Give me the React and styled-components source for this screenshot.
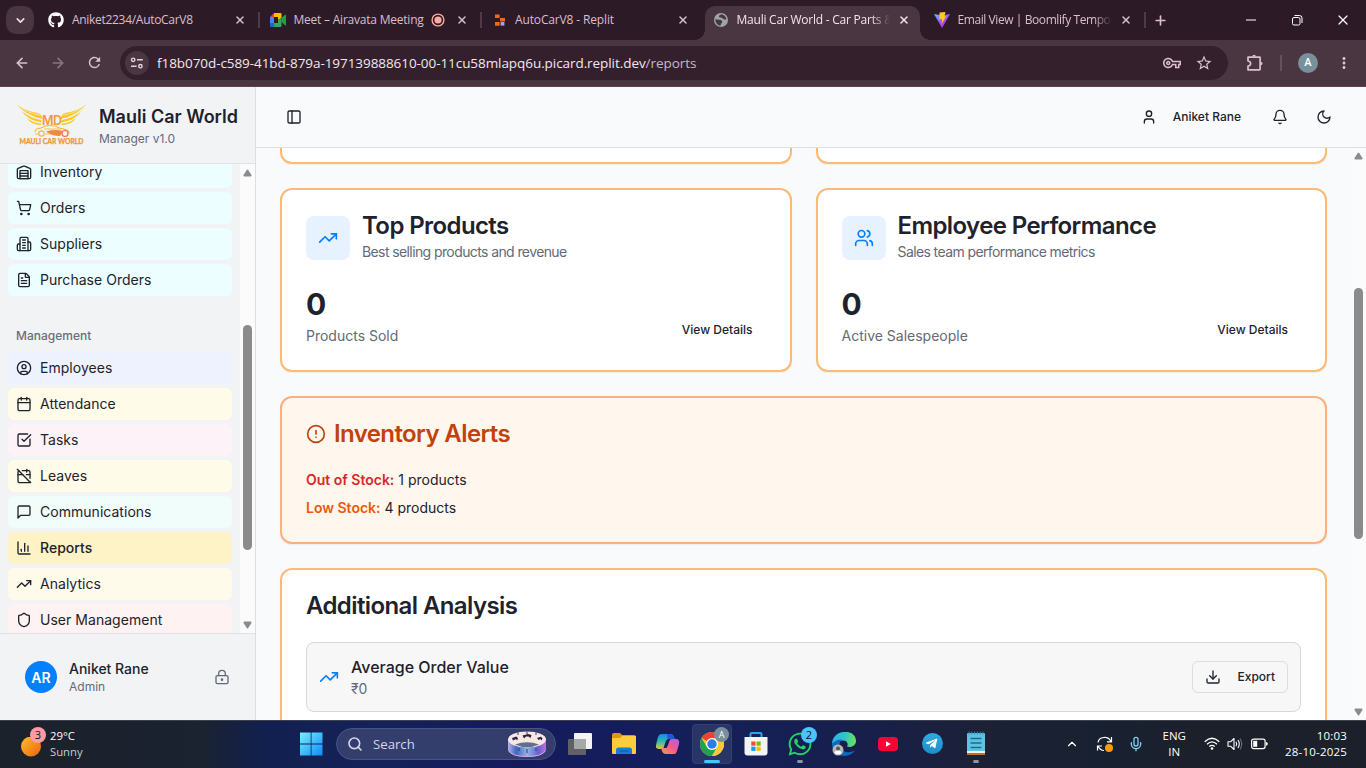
import React from 'react';
import styled, { createGlobalStyle, css } from 'styled-components';
import {
  ShoppingCart, FileText, CircleUser, Calendar, SquareCheckBig, CalendarOff,
  ChartColumn, TrendingUp, Shield, LockKeyhole, PanelLeft, User, Bell, Users,
  CircleAlert, Download, ChevronDown, ChevronUp, X, Plus, Minus, ArrowLeft, ArrowRight, Search, Mic,
} from 'lucide-react';
import { FaGithub, FaWhatsapp, FaTelegramPlane } from 'react-icons/fa';
import { MdOutlineVpnKey, MdStarBorder, MdRefresh, MdMoreVert } from 'react-icons/md';

const Global = createGlobalStyle`
  *, *::before, *::after { box-sizing: border-box; }
  body { margin: 0; overflow: hidden; background: #f9fafc; }
  svg { display: block; flex-shrink: 0; }
`;

const Screen = styled.div`
  width: 1366px;
  height: 768px;
  display: flex;
  flex-direction: column;
  overflow: hidden;
  font-family: Inter, 'Liberation Sans', sans-serif;
  color: #1e222c;
`;

/* ---------- browser window ---------- */

const TabStrip = styled.div`
  height: 40px;
  flex-shrink: 0;
  background: #2c1a26;
  display: flex;
  align-items: center;
  font: 12px 'Open Sans', 'Noto Sans', sans-serif;
`;
const TabSearch = styled.div`
  width: 28px;
  height: 28px;
  margin: 0 6px;
  border-radius: 10px;
  background: #4a3641;
  color: #efdce6;
  display: grid;
  place-items: center;
`;
const Tab = styled.div`
  position: relative;
  width: 221.5px;
  flex-shrink: 0;
  height: 34px;
  margin-top: 6px;
  padding: 0 ${(p) => (p.$separator ? 1.5 : 15.5)}px 6px 8px;
  display: flex;
  align-items: center;
  gap: 8px;
  color: ${(p) => (p.$active ? '#f3e3ec' : '#d9bfce')};
  ${(p) => p.$active && css`
    background: #4a3641;
    border-radius: 10px 10px 0 0;
    width: 215px;
    margin-right: 6px;
    padding-right: 9.5px;
    &::before, &::after {
      content: '';
      position: absolute;
      bottom: 0;
      width: 10px;
      height: 10px;
    }
    &::before { left: -10px; background: radial-gradient(circle at 0 0, transparent 9.5px, #4a3641 10px); }
    &::after { right: -10px; background: radial-gradient(circle at 100% 0, transparent 9.5px, #4a3641 10px); }
  `}
`;
const TabIcon = styled.span`
  width: 16px;
  height: 16px;
  flex-shrink: 0;
  display: grid;
  place-items: center;
`;
const TabTitle = styled.span`
  flex: 1;
  min-width: 0;
  overflow: hidden;
  white-space: nowrap;
  line-height: 18px;
  letter-spacing: ${(p) => p.$spacing}px;
  ${(p) => p.$fade && css`
    mask-image: linear-gradient(90deg, #000 88%, transparent);
  `}
`;
const TabSeparator = styled.span`
  width: 2px;
  height: 16px;
  flex-shrink: 0;
  margin-left: 4px;
  background: #4f3a46;
`;
const NewTab = styled.div`
  margin-left: 6px;
  color: #d9bfce;
`;
const WindowControls = styled.div`
  margin-left: auto;
  padding-right: 15px;
  display: flex;
  gap: 30px;
  color: #fff;
`;

const Toolbar = styled.div`
  height: 47px;
  flex-shrink: 0;
  padding: 0 13px 1px 14px;
  background: #4a3641;
  border-bottom: 1px solid #5b4350;
  display: flex;
  align-items: center;
  color: #dcc0cf;
`;
const NavButton = styled.span`
  width: 16px;
  margin-right: 20px;
  opacity: ${(p) => (p.$disabled ? 0.45 : 1)};
`;
const AddressBar = styled.div`
  width: 1108px;
  height: 34px;
  margin-left: -2px;
  padding: 0 15px 0 5px;
  border-radius: 17px;
  background: #33202c;
  display: flex;
  align-items: center;
`;
const SiteInfo = styled.span`
  width: 24px;
  height: 24px;
  border-radius: 50%;
  background: #4a3641;
  display: grid;
  place-items: center;
`;
const Url = styled.span`
  flex: 1;
  margin-left: 8px;
  white-space: nowrap;
  font: 13.5px 'Open Sans', 'Noto Sans', sans-serif;
  letter-spacing: -0.065px;
  color: #f4e6ee;
  span { color: #cdb6c3; }
`;
const ToolbarIcons = styled.div`
  display: flex;
  align-items: center;
  gap: ${(p) => p.$gap}px;
  margin-left: ${(p) => (p.$end ? 'auto' : 0)};
`;
const Divider = styled.span`
  width: 2px;
  height: 16px;
  background: #66505c;
`;
const ProfileDot = styled.span`
  width: 20px;
  height: 20px;
  margin-right: 1px;
  border-radius: 50%;
  background: #78909c;
  color: #fff;
  display: grid;
  place-items: center;
  font: 500 11px Roboto, sans-serif;
`;

/* ---------- sidebar ---------- */

const Page = styled.div`
  flex: 1;
  min-height: 0;
  display: flex;
  background: #f9fafc;
`;
const Sidebar = styled.aside`
  width: 256px;
  flex-shrink: 0;
  background: #f2f3f5;
  border-right: 1px solid #dcdee2;
  display: flex;
  flex-direction: column;
`;
const Brand = styled.div`
  height: 77px;
  flex-shrink: 0;
  padding: 0 0 0 16px;
  border-bottom: 1px solid #dfe1e5;
  display: flex;
  align-items: center;
  gap: 11px;
`;
const BrandName = styled.div`
  font-size: 18px;
  font-weight: 600;
  line-height: 28px;
  white-space: nowrap;
`;
const BrandSub = styled.div`
  font-size: 12px;
  line-height: 16px;
  color: #646a77;
`;
const SidebarBody = styled.div`
  flex: 1;
  min-height: 0;
  display: flex;
  overflow: hidden;
`;
const NavList = styled.nav`
  width: 240px;
  padding: 0 8px;
  display: flex;
  flex-direction: column;
  gap: 4px;
  margin-top: ${(p) => p.$scroll}px;
`;
const NavItem = styled.div`
  height: 32px;
  flex-shrink: 0;
  padding: 0 8px;
  border-radius: 6px;
  background: ${(p) => p.$bg};
  display: flex;
  align-items: center;
  gap: 8px;
  font-size: 14px;
  letter-spacing: 0.03px;
  font-weight: ${(p) => (p.$active ? 500 : 400)};
  span { padding-bottom: 2px; }
`;
const GroupLabel = styled.div`
  height: 32px;
  flex-shrink: 0;
  margin: 20px 0 -4px;
  padding: 0 8px;
  font-size: 12px;
  font-weight: 500;
  line-height: 32px;
  color: #6a6e78;
`;
const Track = styled.div`
  width: 15px;
  flex-shrink: 0;
  background: #fbfbfb;
  display: flex;
  flex-direction: column;
  align-items: center;
  padding: ${(p) => p.$pad};
`;
const Thumb = styled.div`
  width: 9px;
  height: ${(p) => p.$height}px;
  margin-top: ${(p) => p.$offset}px;
  border-radius: 5px;
  background: #8b8b8b;
`;
const Arrow = styled.svg`
  width: 9px;
  height: 8px;
  fill: #8b8b8b;
  ${(p) => p.$down && css`
    margin-top: auto;
    transform: rotate(180deg);
  `}
`;
const UserPanel = styled.div`
  height: 87px;
  flex-shrink: 0;
  border-top: 1px solid #dfe1e5;
  padding: 0 25px;
  display: flex;
  align-items: center;
  gap: 12px;
`;
const Avatar = styled.div`
  width: 32px;
  height: 32px;
  border-radius: 50%;
  background: #0480ff;
  color: #fff;
  display: grid;
  place-items: center;
  font-size: 14px;
  font-weight: 600;
`;
const UserText = styled.div`
  flex: 1;
  font-size: 14px;
  font-weight: 500;
  line-height: 20px;
  margin-top: -1px;
  small {
    display: block;
    font-size: 12px;
    font-weight: 400;
    line-height: 16px;
    color: #646a77;
  }
`;

/* ---------- main area ---------- */

const Main = styled.main`
  flex: 1;
  min-width: 0;
  display: flex;
  flex-direction: column;
`;
const TopBar = styled.header`
  height: 61px;
  flex-shrink: 0;
  border-bottom: 1px solid #dcdfe4;
  padding: 0 34px 0 30px;
  display: flex;
  align-items: center;
`;
const AccountArea = styled.div`
  margin-left: auto;
  display: flex;
  align-items: center;
  font-size: 12px;
  font-weight: 500;
  span { margin: 0 31px 0 16px; padding-bottom: 1px; }
  svg:last-child { margin-left: 28px; }
`;
const ScrollArea = styled.div`
  flex: 1;
  min-height: 0;
  display: flex;
`;
const Content = styled.div`
  flex: 1;
  min-width: 0;
  padding: 0 24px;
  overflow: hidden;
  display: flex;
  flex-direction: column;
  gap: 24px;
`;
const CardRow = styled.div`
  flex-shrink: 0;
  display: grid;
  grid-template-columns: 1fr 1fr;
  gap: 24px;
`;
const Card = styled.section`
  flex-shrink: 0;
  height: ${(p) => p.$height}px;
  padding: 22px 24px 24px;
  border: 2px solid ${(p) => (p.$warm ? '#fbb07e' : '#fdba74')};
  border-radius: 12px;
  background: ${(p) => (p.$warm ? '#fff6ed' : '#fff')};
  box-shadow: 0 1px 2px rgba(0, 0, 0, 0.06);
`;
const CardTail = styled(Card)`
  border-top: 0;
  border-radius: 0 0 12px 12px;
  padding: 0;
`;
const CardHead = styled.div`
  display: flex;
  align-items: center;
  gap: 12px;
`;
const IconTile = styled.div`
  width: 44px;
  height: 44px;
  margin-top: 1px;
  border-radius: 8px;
  background: #e6f2ff;
  color: #0480ff;
  display: grid;
  place-items: center;
`;
const CardTitle = styled.h2`
  margin: 0;
  display: flex;
  align-items: center;
  gap: 8px;
  font-size: 24px;
  font-weight: 600;
  line-height: 28px;
  letter-spacing: -0.6px;
  color: ${(p) => (p.$alert ? '#c2410c' : 'inherit')};
`;
const CardNote = styled.div`
  font-size: 14px;
  line-height: 20px;
  margin-top: 2px;
  letter-spacing: -0.6px;
  color: #646a77;
`;
const CardFoot = styled.div`
  margin-top: 24px;
  display: flex;
  align-items: center;
  justify-content: space-between;
`;
const Metric = styled.div`
  font-size: 30px;
  font-weight: 700;
  line-height: 36px;
`;
const MetricLabel = styled.div`
  font-size: 14px;
  line-height: 20px;
  margin-top: 4px;
  color: #646a77;
`;
const DetailsButton = styled.div`
  margin: 28px 13px 0 0;
  font-size: 12px;
  font-weight: 500;
  line-height: 16px;
`;
const AlertLine = styled.div`
  font-size: 14px;
  line-height: 20px;
  margin-top: ${(p) => p.$top}px;
  strong { font-weight: 600; color: ${(p) => p.$color}; }
`;
const AnalysisRow = styled.div`
  height: 70px;
  margin-top: 22px;
  padding: 0 12px;
  border: 1px solid #d6d7da;
  border-radius: 8px;
  background: #f7f7f7;
  display: flex;
  align-items: center;
  gap: 12px;
`;
const AnalysisText = styled.div`
  flex: 1;
  font-size: 16px;
  font-weight: 500;
  line-height: 24px;
  small {
    display: block;
    font-size: 14px;
    font-weight: 400;
    line-height: 20px;
    color: #646a77;
  }
`;
const ExportButton = styled.div`
  width: 96px;
  height: 32px;
  padding: 0 12px;
  border: 1px solid #dcdde0;
  border-radius: 6px;
  display: flex;
  align-items: center;
  justify-content: space-between;
  font-size: 12px;
  font-weight: 500;
  span { padding-bottom: 1px; }
`;

/* ---------- taskbar ---------- */

const Taskbar = styled.footer`
  height: 48px;
  flex-shrink: 0;
  padding-bottom: 2px;
  border-top: 1px solid #3b4150;
  background: linear-gradient(90deg, #1c222b 0, #1b2230 200px, #12204f 262px, #14225a 380px, #151a5c 520px, #14205a 700px, #171f4c 860px, #1c2136 980px, #182131 1100px, #1c202b 1200px, #1c202b 100%);
  display: flex;
  align-items: center;
  color: #fff;
  font: 11.5px/16px 'Open Sans', 'Noto Sans', sans-serif;
`;
const Weather = styled.div`
  width: 291px;
  padding-left: 20px;
  display: flex;
  align-items: center;
  gap: 4px;
  font-size: 11.3px;
  color: #c9ccd2;
  b { display: block; font-weight: 400; color: #fff; }
`;
const SearchBox = styled.div`
  width: 220px;
  height: 32px;
  margin: 0 4px 0 5px;
  padding: 0 8px 0 10px;
  border-radius: 16px;
  border: 1px solid #495384;
  background: #343e6c;
  display: flex;
  align-items: center;
  gap: 10px;
  font-size: 13.2px;
  color: #d3d7e6;
  span { flex: 1; }
`;
const Apps = styled.div`
  display: flex;
  align-items: center;
  gap: 4px;
`;
const AppSlot = styled.div`
  position: relative;
  width: 40px;
  height: 40px;
  display: grid;
  place-items: center;
  border-radius: 4px;
  ${(p) => p.$active && css`
    background: rgba(255, 255, 255, 0.09);
    box-shadow: inset 0 0 0 1px rgba(255, 255, 255, 0.06);
  `}
  &::after {
    content: '';
    display: ${(p) => (p.$running || p.$active ? 'block' : 'none')};
    position: absolute;
    bottom: 1px;
    width: ${(p) => (p.$active ? 16 : 6)}px;
    height: 3px;
    border-radius: 2px;
    background: ${(p) => (p.$active ? '#4cc2ff' : '#9094a6')};
  }
`;
const Badge = styled.span`
  position: absolute;
  top: ${(p) => p.$top}px;
  right: ${(p) => p.$right}px;
  width: ${(p) => p.$size || 16}px;
  height: ${(p) => p.$size || 16}px;
  border-radius: 50%;
  background: ${(p) => p.$bg};
  color: ${(p) => p.$fg || '#10131c'};
  display: grid;
  place-items: center;
  font: ${(p) => p.$font || 11}px/1 'Open Sans', sans-serif;
`;
const WeatherIcon = styled.div`
  position: relative;
  width: 26px;
  height: 30px;
  display: flex;
  align-items: flex-end;
`;
const Tray = styled.div`
  margin-left: auto;
  padding-right: 19px;
  display: flex;
  align-items: center;
`;
const TrayItem = styled.div`
  margin-right: ${(p) => p.$gap}px;
  text-align: ${(p) => p.$align || 'center'};
`;
const Clock = styled(TrayItem)`
  text-align: right;
  letter-spacing: 0.2px;
`;

/* ---------- drawings ---------- */

const LineIcon = styled.svg.attrs({
  width: 16,
  height: 16,
  viewBox: '0 0 24 24',
  fill: 'none',
  stroke: 'currentColor',
  strokeWidth: 2,
  strokeLinecap: 'round',
  strokeLinejoin: 'round',
})``;
const WarehouseIcon = () => (
  <LineIcon>
    <path d="M22 8.350V20a2 2 0 0 1-2 2H4a2 2 0 0 1-2-2V8.350A2 2 0 0 1 3.260 6.500l8-3.200a2 2 0 0 1 1.480 0l8 3.200A2 2 0 0 1 22 8.350Z" />
    <path d="M6 18h12M6 14h12" />
    <rect width="12" height="12" x="6" y="10" />
  </LineIcon>
);
const BuildingIcon = () => (
  <LineIcon>
    <path d="M6 22V4a2 2 0 0 1 2-2h8a2 2 0 0 1 2 2v18Z" />
    <path d="M6 12H4a2 2 0 0 0-2 2v6a2 2 0 0 0 2 2h2M18 9h2a2 2 0 0 1 2 2v9a2 2 0 0 1-2 2h-2" />
    <path d="M10 6h4M10 10h4M10 14h4M10 18h4" />
  </LineIcon>
);
const MessageIcon = () => (
  <LineIcon>
    <path d="M21 15a2 2 0 0 1-2 2H7l-4 4V5a2 2 0 0 1 2-2h14a2 2 0 0 1 2 2z" />
  </LineIcon>
);
const MoonIcon = () => (
  <LineIcon>
    <path d="M12 3a6 6 0 0 0 9 9 9 9 0 1 1-9-9Z" />
  </LineIcon>
);
const MeetIcon = () => (
  <svg width="16" height="14" viewBox="0 0 16 14">
    <path d="M0 4 4 0v4z" fill="#ea4335" />
    <path d="M4 0h6.5Q11.5 0 11.5 1v4L8 7V4H4z" fill="#fbbc04" />
    <path d="M0 4h4v6H0z" fill="#4285f4" />
    <path d="M0 10h4v4H1q-1 0-1-1z" fill="#1967d2" />
    <path d="M4 10h4V7l3.5-2v8q0 1-1 1H4z" fill="#34a853" />
    <path d="M11.5 5 15 1.8q1-.5 1 .4v9.6q0 .9-1 .4L11.5 9z" fill="#18a34a" />
  </svg>
);
const RecordMark = styled.svg`
  width: 14px;
  height: 14px;
  margin: 0 3px 0 -2px;
`;
const RecordIcon = () => (
  <RecordMark viewBox="0 0 14 14">
    <circle cx="7" cy="7" r="5.9" fill="none" stroke="#fca99f" strokeWidth="1.4" />
    <circle cx="7" cy="7" r="3.6" fill="#fca99f" />
  </RecordMark>
);
const ReplitIcon = () => (
  <svg width="12" height="12" viewBox="-2 0 12 12">
    <path d="M0 .5h4.6V4H0zM0 8h4.6v3.7H0zM5 4h5v3.6H5z" fill="#f9670b" />
    <path d="M5.6 8h3.8v3.6H5.6z" fill="#a79bff" />
  </svg>
);
const GlobeIcon = () => (
  <svg width="14" height="14" viewBox="0 0 14 14">
    <circle cx="7" cy="7" r="7" fill="#9ea5aa" />
    <path d="M7.500 1.200C5 1.800 4.200 3.800 5.600 4.600c1.300.6 2.600-.2 3.200 1 .4 1 2 .9 3.600.9-.2-2.600-2-4.900-4.900-5.300zM1.300 6.200l3.900.6c1.600.5 3 .3 3 1.900 0 1.500-1.400 1.300-1.500 3.900-3-.1-5.300-2.700-5.400-6.400z" fill="#4a3641" />
  </svg>
);
const ViteIcon = () => (
  <svg width="16" height="16" viewBox="0 0 16 16">
    <defs>
      <linearGradient id="vite" x1="0" y1="0" x2=".7" y2="1">
        <stop offset="0" stopColor="#41d1ff" />
        <stop offset=".6" stopColor="#a44bfe" />
        <stop offset="1" stopColor="#bd34fe" />
      </linearGradient>
    </defs>
    <path d="M0 2 8 16 16 2 8 3.5z" fill="url(#vite)" />
    <path d="m5.500.5 6-.5-1.100 4.400 2-.3L7.600 12l.4-4.900-2.600.5z" fill="#ffca20" />
  </svg>
);
const TuneIcon = () => (
  <svg width="14" height="14" viewBox="0 0 14 14" fill="none" stroke="#e6cfdb" strokeWidth="1.4">
    <circle cx="3.2" cy="3.8" r="1.7" />
    <path d="M7 3.8h5.8M1 10.2h5.6" />
    <circle cx="10.4" cy="10.2" r="1.7" />
  </svg>
);
const ExtensionIcon = () => (
  <svg width="18" height="18" viewBox="0 0 18 18" fill="none" stroke="currentColor" strokeWidth="1.7" strokeLinejoin="round">
    <path d="M2 3.200h11.500q.6 0 .6.600v11.400q0 .6-.6.6H2v-3.600q2.600-.4 2.600-2.600T2 7z" />
    <path d="M6.300 2.600q0-1.800 1.800-1.800t1.800 1.800zM14.700 7.800q1.800 0 1.800 1.800t-1.800 1.800z" fill="currentColor" stroke="none" />
  </svg>
);
const RestoreIcon = () => (
  <svg width="16" height="16" viewBox="0 0 16 16" fill="none" stroke="currentColor">
    <rect x="3.5" y="5.5" width="7.5" height="7.5" rx="1.5" />
    <path d="M5.5 3.5h5q2.500 0 2.500 2.500v5" />
  </svg>
);
const BrandLogo = () => (
  <svg width="72" height="44" viewBox="0 0 72 44">
    <g fill="#fbc71c">
      <path d="M.5 1.500Q11 9 22 10q3.500 1 4.500 6Q9 12 .5 1.500z" />
      <path d="M5.500 8Q14 15 25 17l1 2.500Q12 17.500 5.500 8z" />
      <path d="M11 15q6 5 14 5.500l.5 1.500Q15 22 11 15z" />
      <path d="M70.500 1.500Q60 9 49 10q-3.500 1-4.500 6Q62 12 70.500 1.500z" />
      <path d="M65.500 8Q57 15 46 17l-1 2.500Q59 17.500 65.500 8z" />
      <path d="M60 15q-6 5-14 5.500l-.5 1.500Q56 22 60 15z" />
    </g>
    <path d="M1 3q10 7 23 9M70 3q-10 7-23 9" stroke="#f2f3f5" strokeWidth=".6" fill="none" />
    <text x="36" y="21.500" textAnchor="middle" fontFamily="Inter, sans-serif" fontWeight="600" fontSize="12.500" textLength="20" fill="#f39a35">MD</text>
    <path d="M19 29q0-3.500 6-4l4-2q9-1.600 14.500 2l6 1.500q4 1 3.500 4" fill="none" stroke="#f7b733" strokeWidth="1.100" />
    <path d="M28 26h17M19 31h4M29 31h6" stroke="#f5c04a" strokeWidth=".9" />
    <path d="M30 28.500q9-2.500 17-.5l-3 5q-8 0-14-4.500z" fill="#f08a3c" />
    <g fill="none" strokeWidth="1.200">
      <circle cx="25.500" cy="30.500" r="2.700" stroke="#efc12d" />
      <circle cx="49" cy="30.500" r="3" stroke="#ef6f4c" />
    </g>
    <text x="3.500" y="41" fontFamily="Lato, sans-serif" fontWeight="900" fontSize="7.500" stroke="#f39a35" strokeWidth=".25" textLength="64" lengthAdjust="spacingAndGlyphs" fill="#f39a35">MAULI CAR WORLD</text>
  </svg>
);
const WindowsIcon = () => (
  <svg width="24" height="24" viewBox="0 0 24 24">
    <defs>
      <linearGradient id="win" x1="0" y1="0" x2="1" y2="1">
        <stop offset="0" stopColor="#7bedff" />
        <stop offset="1" stopColor="#0b8df8" />
      </linearGradient>
    </defs>
    <path d="M1 .5h10.700v11H1zM12.500.5h11v11h-11zM1 12.500h10.700v11H1zM12.500 12.500h11v11h-11z" fill="url(#win)" />
  </svg>
);
const CarouselArt = () => (
  <svg width="40" height="28" viewBox="0 0 40 28">
    <defs>
      <linearGradient id="drum" x1="0" y1="0" x2="1" y2="0">
        <stop offset="0" stopColor="#b6b0ee" />
        <stop offset=".22" stopColor="#3f66c0" />
        <stop offset=".5" stopColor="#93b4e6" />
        <stop offset=".8" stopColor="#6663cc" />
        <stop offset="1" stopColor="#c56be0" />
      </linearGradient>
    </defs>
    <path d="M1 9.500v9.500c0 10.500 38 10.500 38 0V9.500z" fill="url(#drum)" />
    <ellipse cx="20" cy="9.500" rx="19" ry="8" fill="#f7e6e1" />
    <path d="M8 14.500q12-4.500 24 0-12 5.500-24 0z" fill="#5f6f8e" />
    <path d="m5 8 4.500-1.500 1.500 2-1 2-1-1.500L6 10.500zM15.500 5.500l5.500-1.500 3.500 1-1 3-2-1.500h-2.500l-2 2zM30 8l4-1.200 1.500 1.700-1 2-1-1.500-2 1z" fill="#262049" />
    <path d="M11 2.500v2.500M20 1.500V4M29 2.500v2.500M12 18v3M20 19v4M29 18v3" stroke="#34366e" />
    <path d="M1.500 20.500q3 6 18.500 6t18.500-6" stroke="#d3a6f0" fill="none" />
  </svg>
);
const TaskViewIcon = () => (
  <svg width="24" height="24" viewBox="0 0 24 24">
    <rect x="6" y="1" width="18" height="16" rx="1" fill="#f3f3f4" />
    <rect x="0" y="7" width="18" height="16" rx="1" fill="#606164" />
    <path d="M6 7h12v10H6z" fill="#a7a7a9" />
  </svg>
);
const FolderIcon = () => (
  <svg width="24" height="24" viewBox="0 0 24 24">
    <path d="M0 3q0-2 2-2h6l2 2h12q2 0 2 2v5H0z" fill="#e0990b" />
    <path d="M0 7q0-1 1-1h7l2-2h14v17q0 1-1 1H1q-1 0-1-1z" fill="#fdcb3e" />
    <path d="M4 22v-4q0-2.500 2.500-2.500h11q2.500 0 2.500 2.500v4z" fill="#1180d0" />
    <path d="M7.500 19h9" stroke="#0a5c9e" />
  </svg>
);
const CopilotIcon = () => (
  <svg width="24" height="22" viewBox="0 0 24 22">
    <defs>
      <linearGradient id="cpA" x1="0" y1="0" x2="0" y2="1">
        <stop offset="0" stopColor="#1686ee" />
        <stop offset=".45" stopColor="#2ab7b8" />
        <stop offset="1" stopColor="#e7c331" />
      </linearGradient>
      <linearGradient id="cpB" x1="1" y1="0" x2="0" y2="1">
        <stop offset="0" stopColor="#b25af0" />
        <stop offset=".5" stopColor="#f05c88" />
        <stop offset="1" stopColor="#fb9a4f" />
      </linearGradient>
    </defs>
    <path d="M5 1h9q3 0 4 3l1 3h-5q-2 0-3 3l-2 6H3q-4 0-3-4L2 4q1-3 3-3z" fill="url(#cpA)" />
    <path d="M11 1h4q2 0 3 3l1 3h-5q-2 0-2.500-2z" fill="#2255d4" />
    <path d="M19 21h-9q-3 0-4-3l-1-3h4q2 0 3-3l2-6h6q4 0 3 5l-2 7q-1 3-2 3z" fill="url(#cpB)" />
    <path d="M12 6h3q-2 1-3 4l-1.500 5h-3l2-6q.5-2.500 2.500-3z" fill="#14225a" />
  </svg>
);
const ChromeIcon = () => (
  <svg width="24" height="24" viewBox="0 0 24 24">
    <circle cx="12" cy="12" r="12" fill="#fcc934" />
    <path d="M12 12 1.600 6A12 12 0 0 1 22.400 6H12z" fill="#ea4335" />
    <path d="M1.600 6A12 12 0 0 0 12 24l5.200-9L12 12 6.800 15z" fill="#1ea351" />
    <path d="M12 6h10.400A12 12 0 0 1 12 24l5.200-9z" fill="#fcc934" />
    <circle cx="12" cy="12" r="6" fill="#fff" />
    <circle cx="12" cy="12" r="4.700" fill="#2b7de9" />
  </svg>
);
const StoreIcon = () => (
  <svg width="24" height="24" viewBox="0 0 24 24">
    <path d="M6.500 6V2q0-1 1-1h9q1 0 1 1v4" fill="none" stroke="#2aa5ea" strokeWidth="2" />
    <path d="M.5 5h23v15.500q0 3-3 3h-17q-3 0-3-3z" fill="#f3f4f6" />
    <path d="M7.300 9.500h4.200v4.200H7.300z" fill="#f25022" />
    <path d="M12.500 9.500h4.200v4.200h-4.200z" fill="#7fba00" />
    <path d="M7.300 14.700h4.200v4.200H7.300z" fill="#00a4ef" />
    <path d="M12.500 14.700h4.200v4.200h-4.200z" fill="#ffb900" />
  </svg>
);
const EdgeIcon = () => (
  <svg width="24" height="24" viewBox="0 0 24 24">
    <defs>
      <linearGradient id="edgeTop" x1="0" y1=".4" x2="1" y2=".5">
        <stop offset="0" stopColor="#2ab2ea" />
        <stop offset=".5" stopColor="#32c4cb" />
        <stop offset="1" stopColor="#6be252" />
      </linearGradient>
    </defs>
    <path d="M0 12C.5-3.500 24-4 24 9c0 5-5.500 7-9 5.500 1.500-2 .5-6-4-6C5 8.500 0 12 0 12z" fill="url(#edgeTop)" />
    <path d="M0 12q4-5 10-4.500c-4 3-3 11 4 12.500 4 .8 8-1 9.500-2C20 23 14 25 9 23.500 3 22 0 17 0 12z" fill="#1069bf" />
    <circle cx="6" cy="18" r="5.500" fill="#b8b8b8" />
    <circle cx="6" cy="16.500" r="2" fill="#565656" />
    <path d="M2.500 21q0-2.500 3.500-2.500t3.500 2.500q-3.500 3-7 0z" fill="#fff" />
  </svg>
);
const YoutubeIcon = () => (
  <svg width="20" height="14" viewBox="0 0 20 14">
    <rect width="20" height="14" rx="3.500" fill="#fb0136" />
    <path d="M8 4.200v5.600L12.800 7z" fill="#fff" />
  </svg>
);
const TelegramDisc = styled.div`
  width: 21px;
  height: 21px;
  border-radius: 50%;
  background: linear-gradient(#32aae0, #1d8ccb);
  display: grid;
  place-items: center;
  padding-right: 2px;
`;
const NotepadIcon = () => (
  <svg width="20" height="25" viewBox="0 0 20 25">
    <rect x="1" y="2" width="18" height="22" rx="1" fill="#5ec3e0" />
    <path d="M1 21h18v3H1z" fill="#c46a2c" />
    <path d="M1 20h18v2H1z" fill="#f6efe4" />
    <path d="M4.500 7.500h11M4.500 12h11M4.500 16.500h11" stroke="#1c6b93" strokeWidth="1.500" />
    <path d="M3 .5v3M5.800.5v3M8.600.5v3M11.400.5v3M14.200.5v3M17 .5v3" stroke="#2b8fb4" />
  </svg>
);
const UpdateIcon = () => (
  <svg width="18" height="18" viewBox="0 0 18 18" fill="none" stroke="#fff" strokeWidth="1.200">
    <path d="M2 7.500C3 1.500 12 .5 15 6.500M15.500 2v4.800H11M8 15.500q-4 0-6-4.500M1.500 15.500V11H6" />
    <circle cx="13" cy="13" r="4" fill="#ff9a0a" stroke="none" />
  </svg>
);
const WifiIcon = () => (
  <svg width="16" height="13" viewBox="0 0 16 13" fill="none" stroke="#fff" strokeWidth="1.300">
    <path d="M.7 4.800q7.300-7 14.600 0M3 7.300q5-4.800 10 0M5.300 9.600q2.700-2.500 5.400 0" />
    <circle cx="8" cy="11.500" r="1.300" fill="#fff" stroke="none" />
  </svg>
);
const VolumeIcon = () => (
  <svg width="16" height="14" viewBox="0 0 16 14" fill="none" stroke="#fff" strokeWidth="1.100">
    <path d="M1 4.800h2.500L7 1.500v11L3.500 9.200H1z" strokeLinejoin="round" />
    <path d="M9 4.800q1.300 2.200 0 4.400M11 3q2.600 4 0 8" />
    <path d="M13 1.500q3.500 5.500 0 11" opacity=".35" />
  </svg>
);
const BatteryIcon = () => (
  <svg width="17" height="12" viewBox="0 0 17 12">
    <rect x=".6" y="1.100" width="13.500" height="9.500" rx="2" fill="none" stroke="#fff" strokeWidth="1.200" />
    <rect x="2.200" y="2.800" width="4" height="6" fill="#fff" />
    <path d="M15 4.200h.6q1 0 1 1v1.200q0 1-1 1H15z" fill="#fff" />
  </svg>
);

const ScrollArrow = (props) => (
  <Arrow viewBox="0 0 10 8" preserveAspectRatio="none" {...props}>
    <path d="M4.200 1q.8-1 1.600 0l3.600 5q.6 1.400-.9 1.500h-7Q0 7.400.6 6z" />
  </Arrow>
);

const stockNav = [
  ['Inventory', WarehouseIcon, '#ecfeff'],
  ['Orders', ShoppingCart, '#ecfeff'],
  ['Suppliers', BuildingIcon, '#ecfeff'],
  ['Purchase Orders', FileText, '#ecfeff'],
];
const managementNav = [
  ['Employees', CircleUser, '#eef2ff'],
  ['Attendance', Calendar, '#fffbe9'],
  ['Tasks', SquareCheckBig, '#fdf2f8'],
  ['Leaves', CalendarOff, '#fffbe9'],
  ['Communications', MessageIcon, '#f0fdfa'],
  ['Reports', ChartColumn, '#fef2c7'],
  ['Analytics', TrendingUp, '#fffbeb'],
  ['User Management', Shield, '#fef2f2'],
];
const NavEntries = ({ items }) =>
  items.map(([label, Icon, bg]) => (
    <NavItem key={label} $bg={bg} $active={label === 'Reports'}>
      <Icon size={16} />
      <span>{label}</span>
    </NavItem>
  ));

const tabs = [
  { title: 'Aniket2234/AutoCarV8', icon: <FaGithub size={16} color="#fff" />, spacing: -0.3, separator: true },
  { title: 'Meet – Airavata Meeting', icon: <MeetIcon />, spacing: -0.22, recording: true, separator: true },
  { title: 'AutoCarV8 - Replit', icon: <ReplitIcon />, spacing: -0.14 },
  { title: 'Mauli Car World - Car Parts &', icon: <GlobeIcon />, spacing: -0.23, active: true, fade: true },
  { title: 'Email View | Boomlify Tempo', icon: <ViteIcon />, spacing: -0.42, fade: true, separator: true },
];

const ReportCard = ({ icon: Icon, title, note, value, label }) => (
  <Card $height={184}>
    <CardHead>
      <IconTile><Icon size={20} /></IconTile>
      <div>
        <CardTitle>{title}</CardTitle>
        <CardNote>{note}</CardNote>
      </div>
    </CardHead>
    <CardFoot>
      <div>
        <Metric>{value}</Metric>
        <MetricLabel>{label}</MetricLabel>
      </div>
      <DetailsButton>View Details</DetailsButton>
    </CardFoot>
  </Card>
);

export default function App() {
  return (
    <Screen>
      <Global />
      <TabStrip>
        <TabSearch><ChevronDown size={13} strokeWidth={3} /></TabSearch>
        {tabs.map((t) => (
          <Tab key={t.title} $active={t.active} $separator={t.separator}>
            <TabIcon>{t.icon}</TabIcon>
            <TabTitle $fade={t.fade} $spacing={t.spacing}>{t.title}</TabTitle>
            {t.recording && <RecordIcon />}
            <X size={12} strokeWidth={3} />
            {t.separator && <TabSeparator />}
          </Tab>
        ))}
        <NewTab><Plus size={15} strokeWidth={2.6} /></NewTab>
        <WindowControls>
          <Minus size={16} strokeWidth={1.5} />
          <RestoreIcon />
          <X size={16} strokeWidth={1.8} />
        </WindowControls>
      </TabStrip>
      <Toolbar>
        <NavButton><ArrowLeft size={16} strokeWidth={2.4} /></NavButton>
        <NavButton $disabled><ArrowRight size={16} strokeWidth={2.4} /></NavButton>
        <NavButton><MdRefresh size={17} /></NavButton>
        <AddressBar>
          <SiteInfo><TuneIcon /></SiteInfo>
          <Url>f18b070d-c589-41bd-879a-197139888610-00-11cu58mlapq6u.picard.replit.dev<span>/reports</span></Url>
          <ToolbarIcons $gap={14}>
            <MdOutlineVpnKey size={18} />
            <MdStarBorder size={18} />
          </ToolbarIcons>
        </AddressBar>
        <ToolbarIcons $gap={16} $end>
          <ExtensionIcon />
          <Divider />
          <ProfileDot>A</ProfileDot>
          <MdMoreVert size={18} />
        </ToolbarIcons>
      </Toolbar>

      <Page>
        <Sidebar>
          <Brand>
            <BrandLogo />
            <div>
              <BrandName>Mauli Car World</BrandName>
              <BrandSub>Manager v1.0</BrandSub>
            </div>
          </Brand>
          <SidebarBody>
            <NavList $scroll={-8}>
              <NavEntries items={stockNav} />
              <GroupLabel>Management</GroupLabel>
              <NavEntries items={managementNav} />
            </NavList>
            <Track $pad="5px 0 4px">
              <ScrollArrow />
              <Thumb $height={225} $offset={148} />
              <ScrollArrow $down />
            </Track>
          </SidebarBody>
          <UserPanel>
            <Avatar>AR</Avatar>
            <UserText>Aniket Rane<small>Admin</small></UserText>
            <LockKeyhole size={16} color="#646a77" />
          </UserPanel>
        </Sidebar>

        <Main>
          <TopBar>
            <PanelLeft size={16} />
            <AccountArea>
              <User size={16} />
              <span>Aniket Rane</span>
              <Bell size={16} />
              <MoonIcon />
            </AccountArea>
          </TopBar>
          <ScrollArea>
            <Content>
              <CardRow>
                <CardTail $height={16} />
                <CardTail $height={16} />
              </CardRow>
              <CardRow>
                <ReportCard icon={TrendingUp} title="Top Products" note="Best selling products and revenue" value="0" label="Products Sold" />
                <ReportCard icon={Users} title="Employee Performance" note="Sales team performance metrics" value="0" label="Active Salespeople" />
              </CardRow>
              <Card $height={148} $warm>
                <CardTitle $alert><CircleAlert size={20} />Inventory Alerts</CardTitle>
                <AlertLine $top={22} $color="#dc2626"><strong>Out of Stock:</strong> 1 products</AlertLine>
                <AlertLine $top={8} $color="#ea580c"><strong>Low Stock:</strong> 4 products</AlertLine>
              </Card>
              <Card $height={184}>
                <CardTitle>Additional Analysis</CardTitle>
                <AnalysisRow>
                  <TrendingUp size={20} color="#0480ff" />
                  <AnalysisText>Average Order Value<small>₹0</small></AnalysisText>
                  <ExportButton><Download size={16} /><span>Export</span></ExportButton>
                </AnalysisRow>
              </Card>
            </Content>
            <Track $pad="4px 0 4px">
              <ScrollArrow />
              <Thumb $height={251} $offset={128} />
              <ScrollArrow $down />
            </Track>
          </ScrollArea>
        </Main>
      </Page>

      <Taskbar>
        <Weather>
          <WeatherIcon>
            <svg width="22" height="22" viewBox="0 0 22 22">
              <defs>
                <linearGradient id="sun" x1="0" y1="0" x2="1" y2="1">
                  <stop offset="0" stopColor="#fbc02d" />
                  <stop offset="1" stopColor="#f1600d" />
                </linearGradient>
              </defs>
              <circle cx="11" cy="9.500" r="10" fill="url(#sun)" />
            </svg>
            <Badge $top={-2} $right={0} $bg="#ff99a4">3</Badge>
          </WeatherIcon>
          <div><b>29°C</b>Sunny</div>
        </Weather>
        <AppSlot><WindowsIcon /></AppSlot>
        <SearchBox>
          <Search size={16} strokeWidth={2.4} />
          <span>Search</span>
          <CarouselArt />
        </SearchBox>
        <Apps>
          <AppSlot><TaskViewIcon /></AppSlot>
          <AppSlot><FolderIcon /></AppSlot>
          <AppSlot><CopilotIcon /></AppSlot>
          <AppSlot $active><ChromeIcon /><Badge $top={3} $right={3} $bg="#78909c" $fg="#fff" $size={15} $font={9}>A</Badge></AppSlot>
          <AppSlot><StoreIcon /></AppSlot>
          <AppSlot $running><FaWhatsapp size={26} color="#25d366" /><Badge $top={3} $right={3} $bg="#4cc2ff">2</Badge></AppSlot>
          <AppSlot><EdgeIcon /></AppSlot>
          <AppSlot><YoutubeIcon /></AppSlot>
          <AppSlot><TelegramDisc><FaTelegramPlane size={13} color="#fff" /></TelegramDisc></AppSlot>
          <AppSlot $running><NotepadIcon /></AppSlot>
        </Apps>
        <Tray>
          <TrayItem $gap={17}><ChevronUp size={14} /></TrayItem>
          <TrayItem $gap={14}><UpdateIcon /></TrayItem>
          <TrayItem $gap={19}><Mic size={16} color="#7fd0f5" /></TrayItem>
          <TrayItem $gap={18}>ENG<br />IN</TrayItem>
          <TrayItem $gap={7}><WifiIcon /></TrayItem>
          <TrayItem $gap={8}><VolumeIcon /></TrayItem>
          <TrayItem $gap={17}><BatteryIcon /></TrayItem>
          <Clock $gap={0}>10:03<br />28-10-2025</Clock>
        </Tray>
      </Taskbar>
    </Screen>
  );
}
